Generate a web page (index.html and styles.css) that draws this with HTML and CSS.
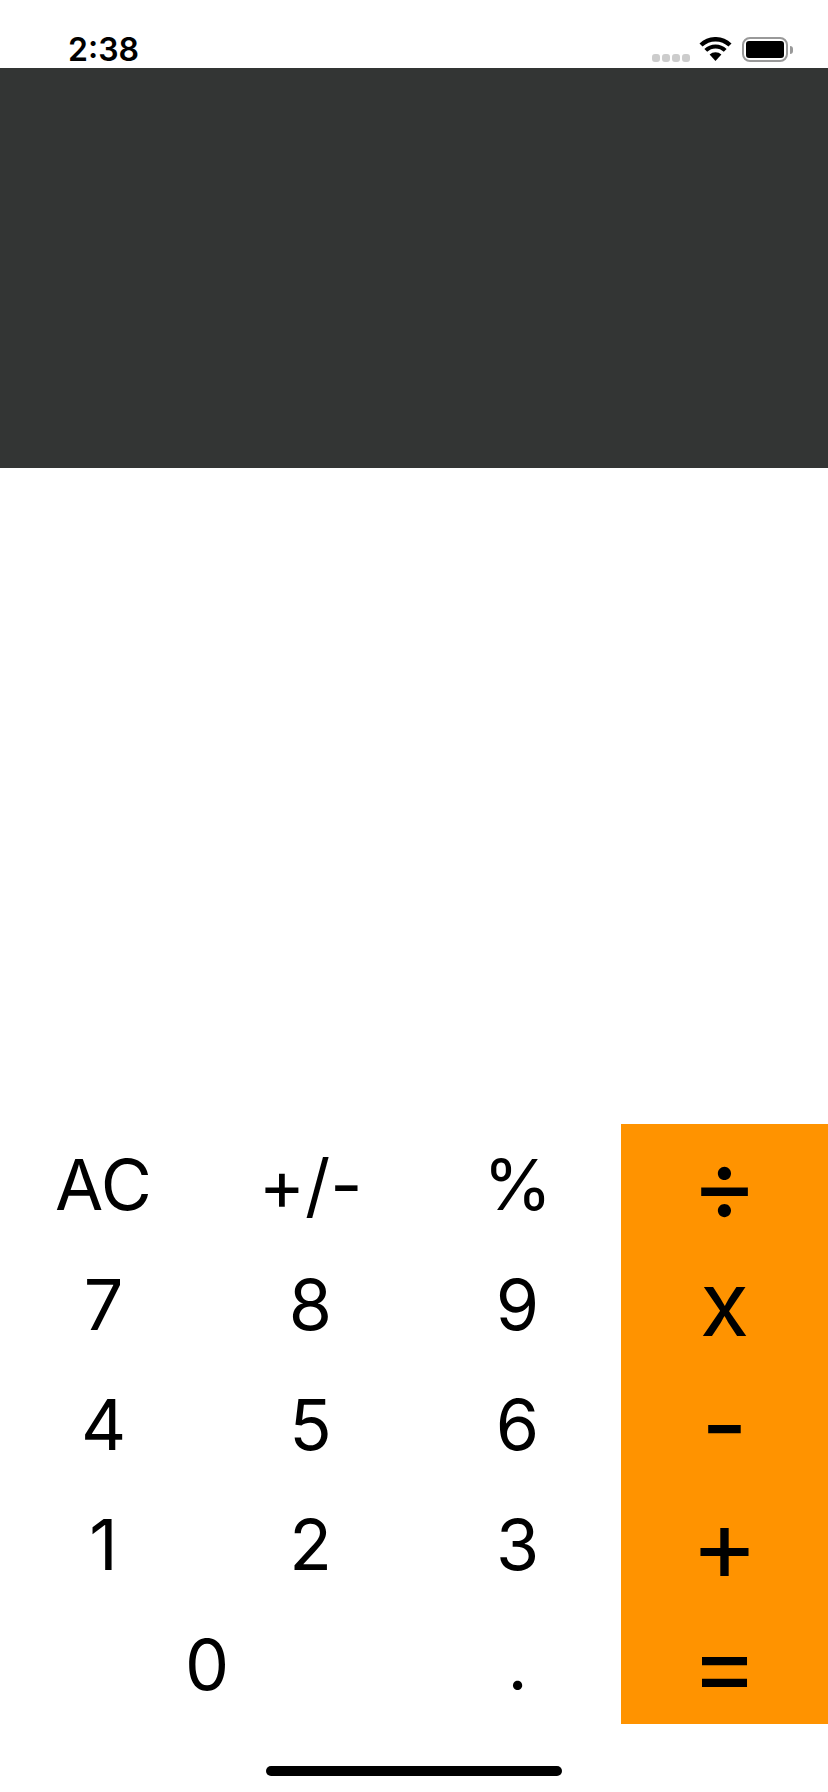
FILE: index.html
```html
<!DOCTYPE html>
<html lang="en">
<head>
<meta charset="utf-8">
<title>Calculator</title>
<link rel="stylesheet" href="styles.css">
</head>
<body>
<div class="app">
  <header class="status">
    <span class="time">2:38</span>
    <div class="indicators">
      <div class="signal"><i></i><i></i><i></i><i></i></div>
      <svg class="wifi" width="33" height="24" viewBox="0 0 33 24" aria-hidden="true">
        <path d="M16.5 24 L10.6 17.6 A8.6 8.6 0 0 1 22.4 17.6 Z" fill="#000"/>
        <path d="M6.8 13.4 A13.8 13.8 0 0 1 26.2 13.4" fill="none" stroke="#000" stroke-width="4"/>
        <path d="M2 8 A21 21 0 0 1 31 8" fill="none" stroke="#000" stroke-width="4.4"/>
      </svg>
      <div class="battery"><div class="battery-body"><div class="battery-level"></div></div><div class="battery-nub"></div></div>
    </div>
  </header>
  <div class="display"></div>
  <div class="spacer"></div>
  <main class="keypad">
    <div class="key">AC</div>
    <div class="key">+/-</div>
    <div class="key">%</div>
    <div class="key op sym">÷</div>
    <div class="key">7</div>
    <div class="key">8</div>
    <div class="key">9</div>
    <div class="key op">x</div>
    <div class="key">4</div>
    <div class="key">5</div>
    <div class="key">6</div>
    <div class="key op sym">-</div>
    <div class="key">1</div>
    <div class="key">2</div>
    <div class="key">3</div>
    <div class="key op sym">+</div>
    <div class="key wide">0</div>
    <div class="key">.</div>
    <div class="key op sym">=</div>
  </main>
  <footer class="home"><div class="home-bar"></div></footer>
</div>
</body>
</html>
```
FILE: styles.css
```css
* { box-sizing: border-box; }
html, body { margin: 0; padding: 0; background: #fff; }
body { font-family: Inter, "Liberation Sans", sans-serif; color: #000; }
.app { width: 828px; height: 1792px; display: flex; flex-direction: column; overflow: hidden; }
.status { height: 68px; display: flex; justify-content: space-between; align-items: flex-end; padding: 0 35px 6px 68px; }
.time { font-size: 32px; font-weight: 600; line-height: 36px; margin-bottom: -6px; }
.indicators { display: flex; align-items: flex-start; height: 25px; }
.signal { display: flex; gap: 2px; margin-top: 17px; margin-right: 9px; }
.signal i { display: block; width: 8px; height: 8px; border-radius: 3px; background: #ccc; }
.wifi { margin-right: 10px; display: block; }
.battery { display: flex; align-items: center; height: 25px; }
.battery-body { width: 46px; height: 25px; border: 2px solid #999; border-radius: 8px; padding: 2px; }
.battery-level { width: 100%; height: 100%; background: #000; border-radius: 3px; }
.battery-nub { width: 3px; height: 8px; margin-left: 2px; background: #999; border-radius: 0 3px 3px 0; }
.display { height: 400px; background: #333534; }
.spacer { height: 656px; }
.keypad { height: 600px; display: grid; grid-template-columns: repeat(4, 207px); grid-template-rows: repeat(5, 120px); }
.key { text-align: center; font-size: 70px; line-height: 120px; font-weight: 400; padding-top: 1px; }
.wide { grid-column: span 2; }
.op { background: #ff9300; font-size: 90px; padding-top: 0; }
.sym { font-size: 102px; font-weight: 400; line-height: 120px; }
.home { height: 68px; padding-top: 42px; display: flex; justify-content: center; }
.home-bar { width: 296px; height: 10px; border-radius: 5px; background: #000; }
```
